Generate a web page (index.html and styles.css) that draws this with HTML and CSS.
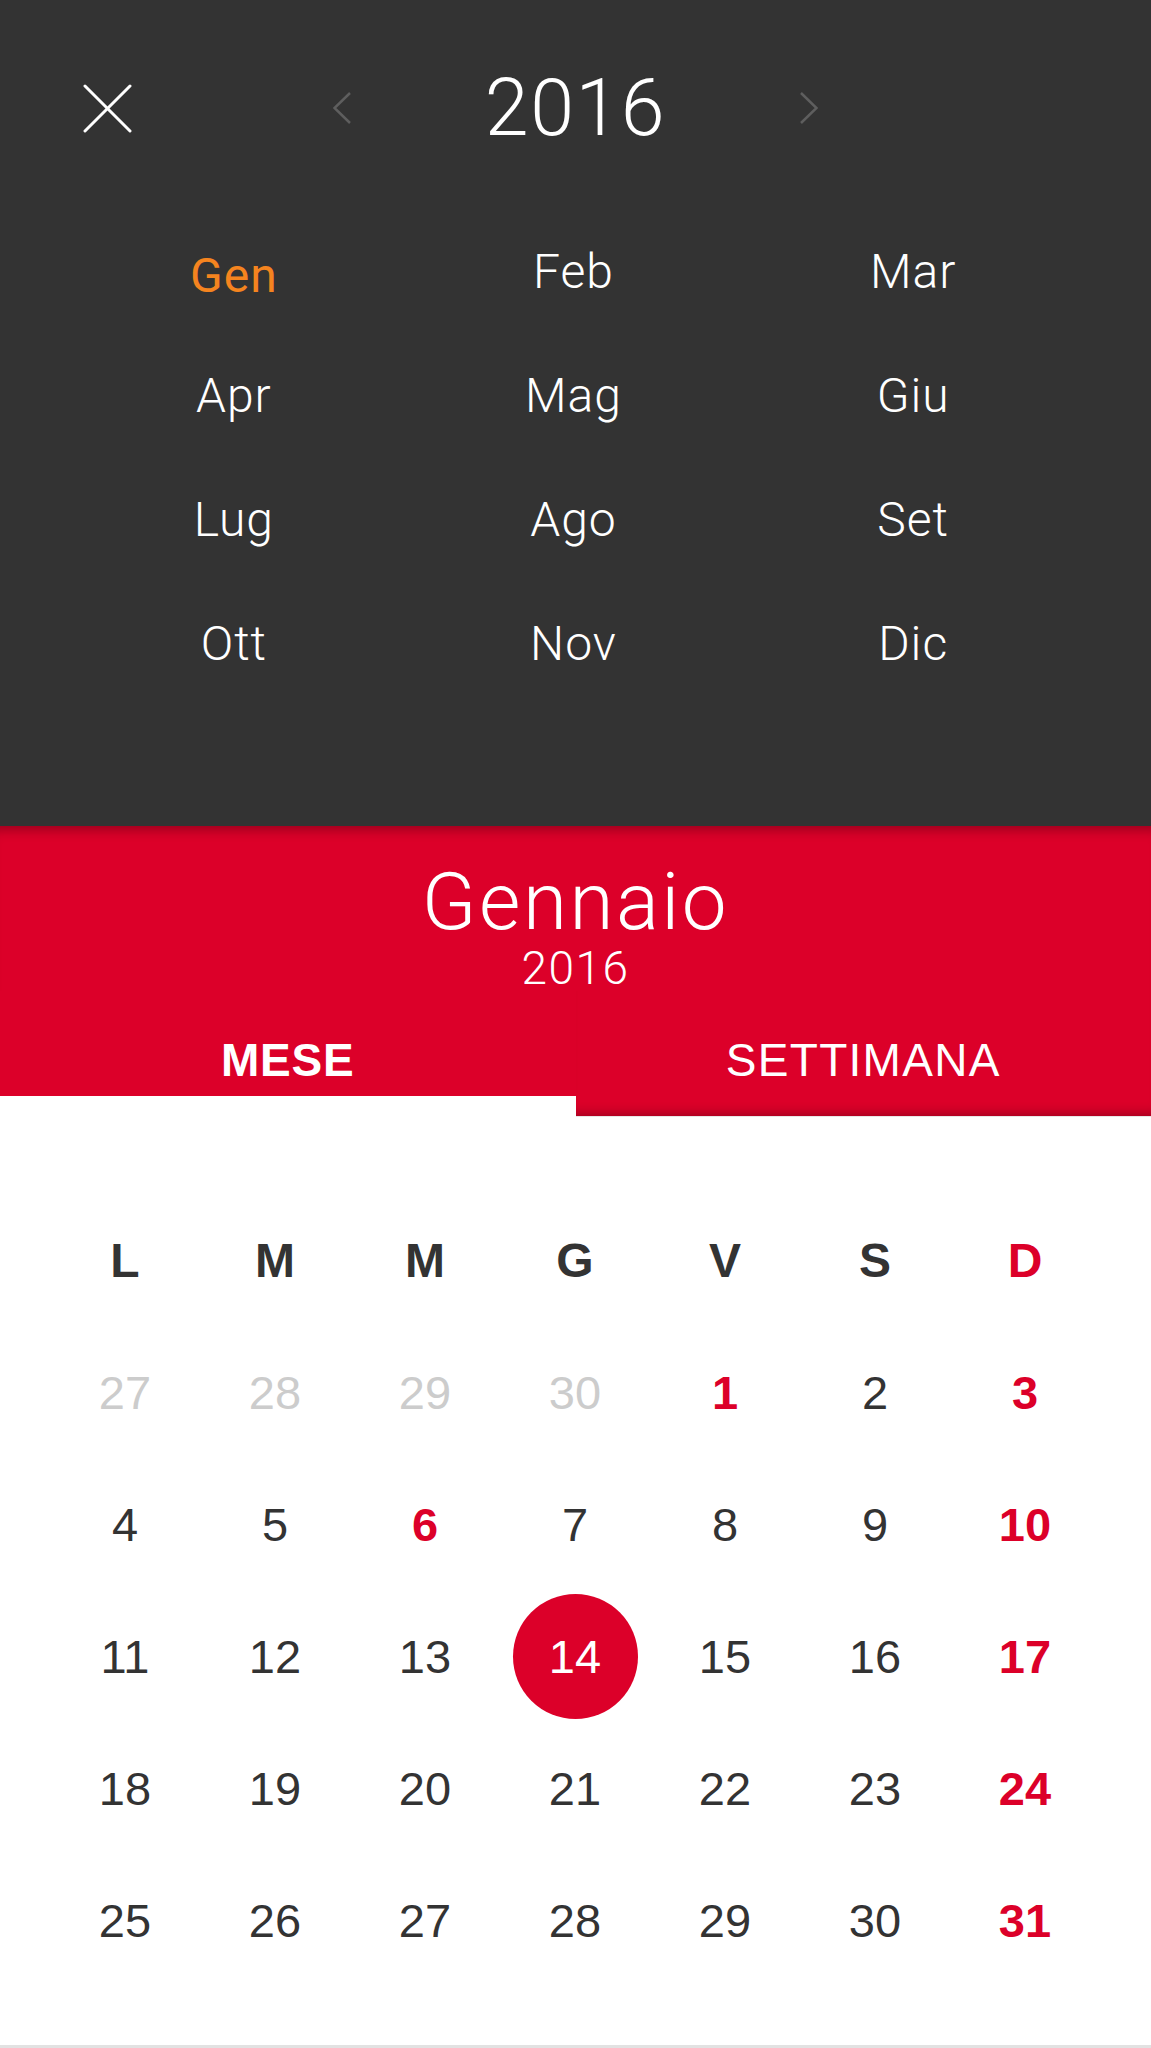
FILE: index.html
```html
<!DOCTYPE html>
<html lang="it">

<head>
    <meta charset="UTF-8" />
    <meta name="viewport" content="width=device-width, initial-scale=1.0" />
    <title>Calendario</title>
    <link rel="stylesheet" href="styles.css">
</head>

<body>
    <div class="picker">
        <div class="picker-top">
            <div class="close-cell">
                <button class="close" aria-label="Chiudi">
                    <svg width="49" height="49" viewBox="0 0 49 49">
                        <line x1="2" y1="2" x2="47" y2="47" />
                        <line x1="47" y1="2" x2="2" y2="47" />
                    </svg>
                </button>
            </div>
            <div class="year-nav">
                <svg class="chev" width="18" height="32" viewBox="0 0 18 32">
                    <polyline points="17,1 1.5,16 17,31" />
                </svg>
                <span class="year">2016</span>
                <svg class="chev" width="18" height="32" viewBox="0 0 18 32">
                    <polyline points="1,1 16.5,16 1,31" />
                </svg>
            </div>
            <div></div>
        </div>
        <div class="months">
            <span class="month current">Gen</span>
            <span class="month">Feb</span>
            <span class="month">Mar</span>
            <span class="month">Apr</span>
            <span class="month">Mag</span>
            <span class="month">Giu</span>
            <span class="month">Lug</span>
            <span class="month">Ago</span>
            <span class="month">Set</span>
            <span class="month">Ott</span>
            <span class="month">Nov</span>
            <span class="month">Dic</span>
        </div>
    </div>

    <div class="month-head">
        <div class="month-name">Gennaio</div>
        <div class="month-year">2016</div>
    </div>
    <div class="tabs">
        <div class="tab active">MESE</div>
        <div class="tab">SETTIMANA</div>
    </div>

    <div class="calendar">
        <div class="weekdays">
            <span>L</span><span>M</span><span>M</span><span>G</span><span>V</span><span>S</span><span class="red">D</span>
        </div>
        <div class="days">
            <span class="day other"><b>27</b></span>
            <span class="day other"><b>28</b></span>
            <span class="day other"><b>29</b></span>
            <span class="day other"><b>30</b></span>
            <span class="day red"><b>1</b></span>
            <span class="day"><b>2</b></span>
            <span class="day red"><b>3</b></span>

            <span class="day"><b>4</b></span>
            <span class="day"><b>5</b></span>
            <span class="day red"><b>6</b></span>
            <span class="day"><b>7</b></span>
            <span class="day"><b>8</b></span>
            <span class="day"><b>9</b></span>
            <span class="day red"><b>10</b></span>

            <span class="day"><b>11</b></span>
            <span class="day"><b>12</b></span>
            <span class="day"><b>13</b></span>
            <span class="day today"><b>14</b></span>
            <span class="day"><b>15</b></span>
            <span class="day"><b>16</b></span>
            <span class="day red"><b>17</b></span>

            <span class="day"><b>18</b></span>
            <span class="day"><b>19</b></span>
            <span class="day"><b>20</b></span>
            <span class="day"><b>21</b></span>
            <span class="day"><b>22</b></span>
            <span class="day"><b>23</b></span>
            <span class="day red"><b>24</b></span>

            <span class="day"><b>25</b></span>
            <span class="day"><b>26</b></span>
            <span class="day"><b>27</b></span>
            <span class="day"><b>28</b></span>
            <span class="day"><b>29</b></span>
            <span class="day"><b>30</b></span>
            <span class="day red"><b>31</b></span>
        </div>
    </div>
</body>

</html>
```

FILE: styles.css
```css
body {
    margin: 0;
    font-family: "Liberation Sans", Arial, sans-serif;
    background-color: #e2e2e2;
    color: #333333;
}

/* year / month picker */
.picker {
    background-color: #333333;
    height: 826px;
    box-sizing: border-box;
}

.picker-top {
    display: grid;
    grid-template-columns: 1fr auto 1fr;
    align-items: center;
    height: 210px;
    padding-top: 6px;
    box-sizing: border-box;
}

.close-cell {
    padding-left: 83px;
}

.close {
    display: block;
    padding: 0;
    background: none;
    border: none;
    cursor: pointer;
}

.close svg {
    display: block;
    stroke: #ffffff;
    stroke-width: 3;
    stroke-linecap: round;
}

.year-nav {
    display: flex;
    align-items: center;
    gap: 134px;
}

.chev {
    display: block;
    fill: none;
    stroke: #5e5e5e;
    stroke-width: 2.5;
}

.year {
    font-family: Roboto, "Liberation Sans", sans-serif;
    font-weight: 300;
    font-size: 79px;
    line-height: 1;
    letter-spacing: 1.5px;
    color: #ffffff;
}

.months {
    display: grid;
    grid-template-columns: repeat(3, 1fr);
    grid-auto-rows: 124px;
    padding: 0 68px 0 64px;
}

.month {
    text-align: center;
    line-height: 124px;
    font-family: Roboto, "Liberation Sans", sans-serif;
    font-weight: 300;
    font-size: 48px;
    letter-spacing: 1px;
    color: #ffffff;
}

.month.current {
    color: #f5841f;
    font-weight: 400;
    padding-top: 4px;
}

/* red month header */
.month-head {
    background-color: #dc0029;
    box-shadow: inset 0 14px 12px -10px rgba(0, 0, 0, 0.3);
    padding-top: 38px;
    text-align: center;
    color: #ffffff;
    font-family: Roboto, "Liberation Sans", sans-serif;
    font-weight: 300;
}

.month-name {
    font-size: 80px;
    line-height: 76px;
    letter-spacing: 2.5px;
}

.month-year {
    font-size: 46px;
    line-height: 46px;
    letter-spacing: 1.5px;
    margin-top: 5px;
}

.tabs {
    display: grid;
    grid-template-columns: 1fr 1fr;
    align-items: start;
    background: #ffffff;
}

.tab {
    background-color: #dc0029;
    color: #ffffff;
    text-align: center;
    font-size: 46px;
    line-height: 46px;
    letter-spacing: 1.3px;
    padding: 46px 0 13px;
}

.tab.active {
    font-weight: bold;
    letter-spacing: 0.8px;
}

.tab:not(.active) {
    padding-bottom: 33px;
    box-shadow: inset 0 -12px 12px -10px rgba(0, 0, 0, 0.3);
    border-bottom: 1px solid #e6e6e6;
    margin-bottom: -1px;
}

/* month grid */
.calendar {
    background: #ffffff;
    padding: 78px 51px 59px 50px;
}

.weekdays,
.days {
    display: grid;
    grid-template-columns: repeat(7, 1fr);
    grid-auto-rows: 132px;
}

.weekdays span {
    display: flex;
    align-items: center;
    justify-content: center;
    font-weight: bold;
    font-size: 48px;
}

.day {
    display: flex;
    align-items: center;
    justify-content: center;
}

.day b {
    display: flex;
    align-items: center;
    justify-content: center;
    width: 125px;
    height: 125px;
    border-radius: 50%;
    font-weight: normal;
    font-size: 47px;
}

.red,
.day.red b {
    color: #dc0029;
    font-weight: bold;
}

.day.other b {
    color: #cccccc;
}

.day.today b {
    background-color: #dc0029;
    color: #ffffff;
}
```
